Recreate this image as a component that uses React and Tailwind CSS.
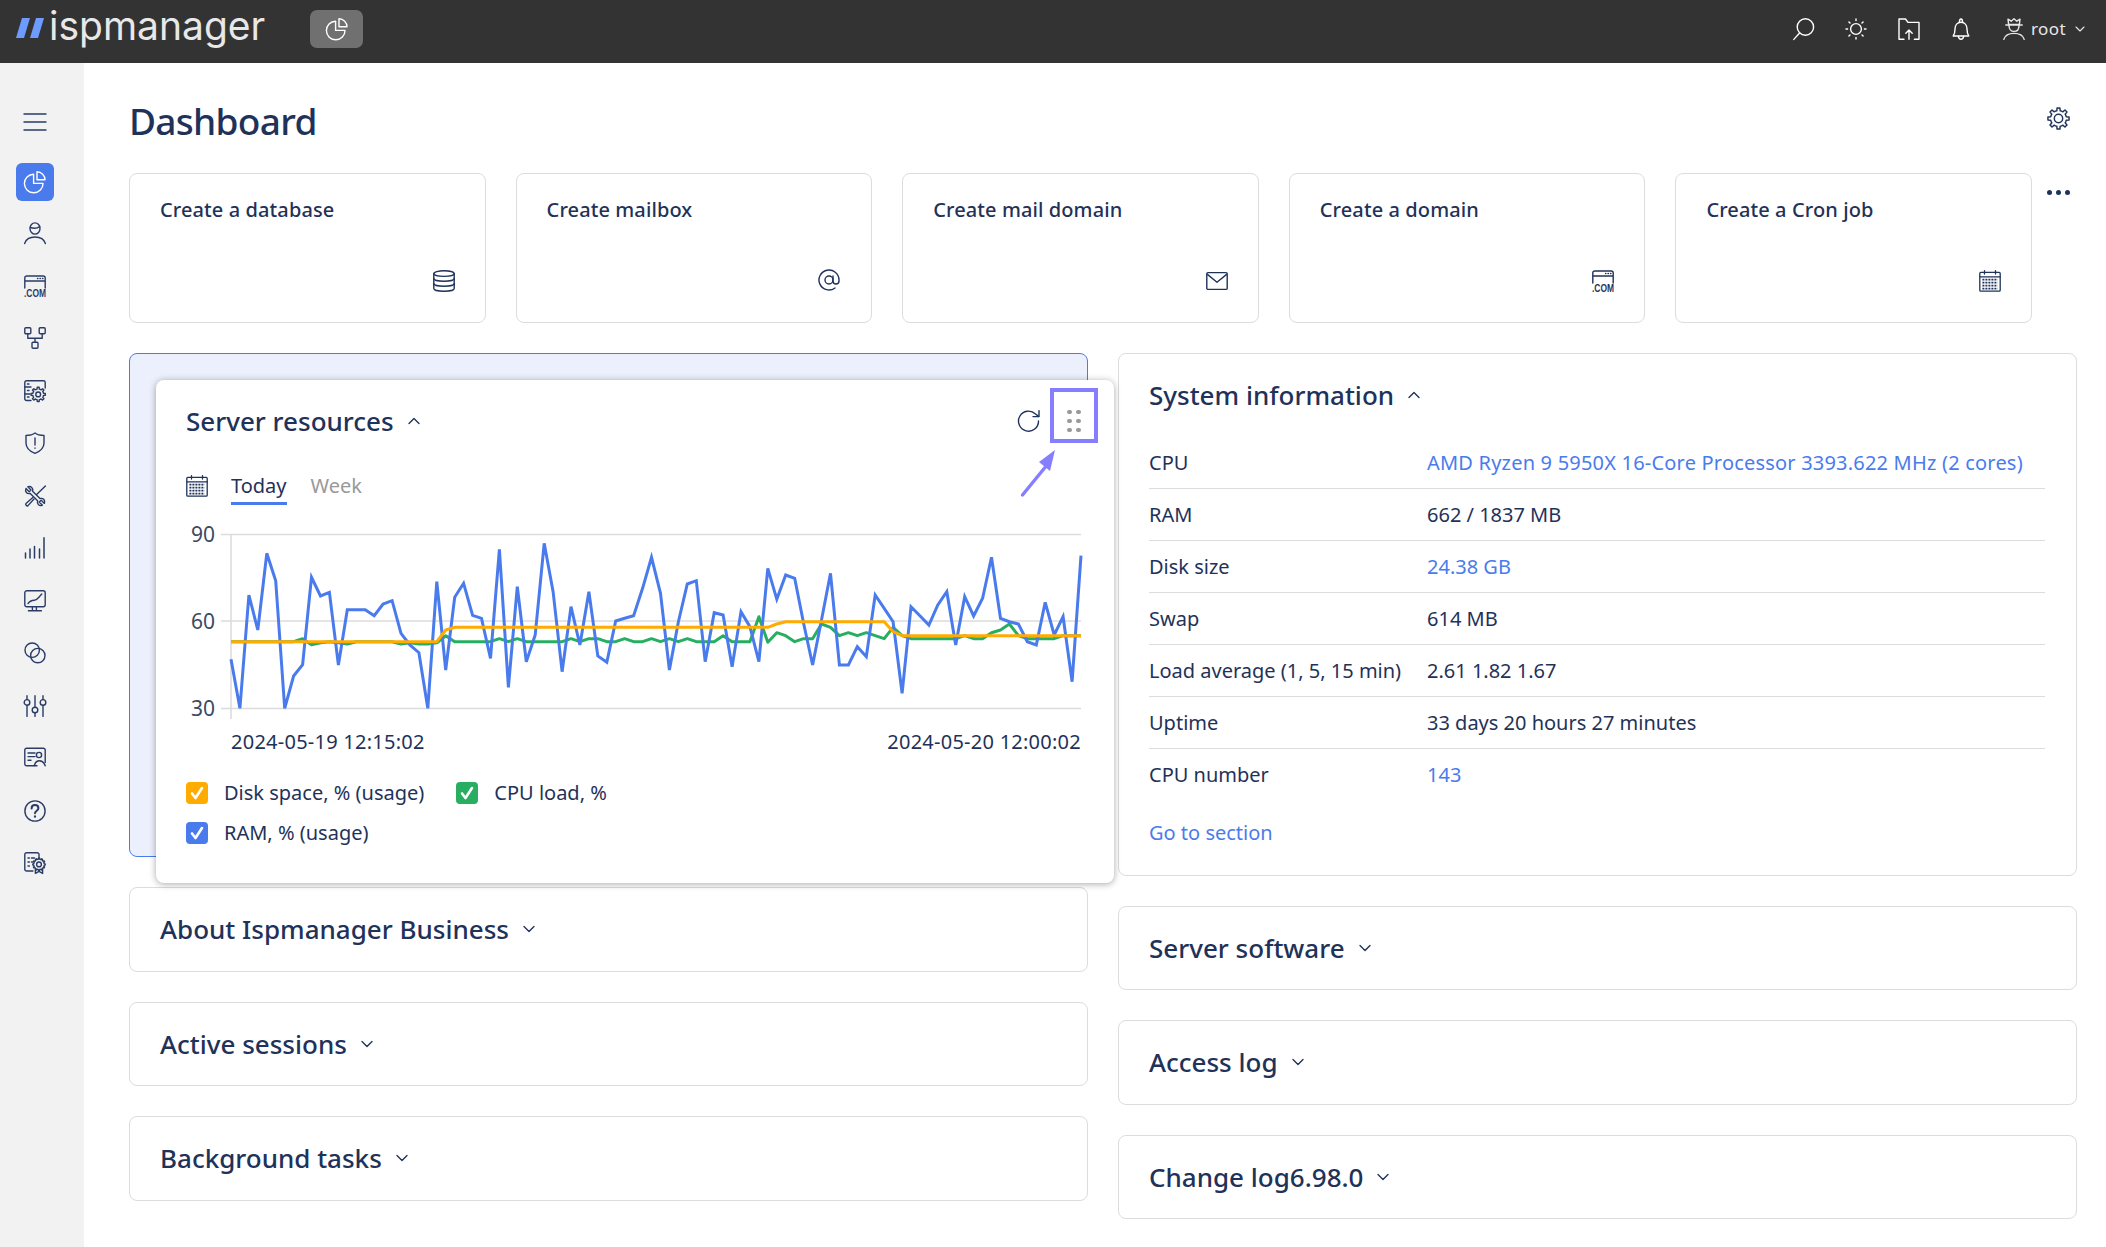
import React from 'react';
import { AtSign, ChevronDown, ChevronUp } from 'lucide-react';

// chart samples, y in screen px * 3 relative to the top of the card area
const RAM = [928,1075,735,840,610,692,1075,978,944,682,738,727,945,779,779,779,797,762,752,850,885,908,1075,695,960,742,700,796,805,925,598,1012,710,935,855,580,725,965,770,885,725,918,937,813,805,797,715,622,730,960,815,702,692,935,788,795,950,785,830,935,655,748,675,685,820,945,810,670,945,945,890,920,735,775,815,1030,770,797,825,765,725,885,740,798,745,622,805,815,822,875,885,757,855,800,995,617];
const CPU = [875,875,875,875,875,875,875,875,866,884,878,875,878,882,875,875,875,875,875,882,878,882,882,878,857,875,875,875,875,875,866,875,866,875,875,875,875,875,866,875,866,866,875,875,866,875,875,866,875,866,875,866,875,875,875,857,875,875,875,800,877,848,857,875,866,866,822,832,857,848,857,848,857,866,832,857,866,866,866,866,866,866,857,866,866,848,840,822,857,866,866,866,866,857,857,857];
const DISK = RAM.map((_, i) => {
  if (i <= 23) return 875;
  if (i === 24) return 840;
  if (i <= 60) return 832;
  if (i === 61) return 822;
  if (i <= 73) return 815;
  if (i === 74) return 845;
  return 857;
});

const points = (arr) => arr.map((v, i) => `${(231 + (i * 850) / 95).toFixed(1)},${(350 + v / 3).toFixed(1)}`).join(' ');

function gearPath(cx, cy, r1, r2, teeth) {
  const step = (Math.PI * 2) / teeth;
  let d = '';
  for (let i = 0; i < teeth; i++) {
    const a = i * step - Math.PI / 2;
    const p = [
      [r2, a - step * 0.5],
      [r2, a - step * 0.27],
      [r1, a - step * 0.17],
      [r1, a + step * 0.17],
      [r2, a + step * 0.27],
    ];
    p.forEach(([r, t], j) => {
      d += `${i === 0 && j === 0 ? 'M' : 'L'}${(cx + r * Math.cos(t)).toFixed(2)} ${(cy + r * Math.sin(t)).toFixed(2)}`;
    });
  }
  return d + 'Z';
}

function Ic({ children, className = 'w-[22px] h-[22px]', sw = 1.4 }) {
  return (
    <svg viewBox="0 0 22 22" fill="none" stroke="currentColor" strokeWidth={sw} strokeLinecap="round" strokeLinejoin="round" className={`overflow-visible ${className}`}>
      {children}
    </svg>
  );
}

const Pie = () => (
  <Ic>
    <path d="M9.6 3.2A9.3 9.3 0 1 0 19 12.4H9.6Z" />
    <path d="M13 .8v8h8A8 8 0 0 0 13 .8Z" />
  </Ic>
);
const Menu = () => (
  <Ic>
    <path d="M0 3h22M0 11h22M0 19h22" />
  </Ic>
);
const User = () => (
  <Ic>
    <ellipse cx="11" cy="6.5" rx="5" ry="5.6" />
    <path d="M6.2 5.5C9 6.5 13 6.5 15.8 4.6" />
    <path d="M.6 21.5C2 17 6 15 11 15s9 2 10.4 6.5" />
  </Ic>
);
const Com = () => (
  <Ic>
    <path d="M.8 13V3A2 2 0 0 1 2.8 1h16.4a2 2 0 0 1 2 2v10M.8 6h20.4" />
    <path d="M13.5 3.5h.4M16 3.5h.4M18.5 3.5h.4" />
    <text x="0" y="21.8" fontSize="10.5" fontWeight="700" fill="currentColor" stroke="none" textLength="22" lengthAdjust="spacingAndGlyphs" fontFamily="'Liberation Sans', sans-serif">.COM</text>
  </Ic>
);
const Network = () => (
  <Ic>
    <rect x=".8" y=".8" width="6" height="6" rx="1" />
    <rect x="15.2" y=".8" width="6" height="6" rx="1" />
    <rect x="8" y="15.2" width="6" height="6" rx="1" />
    <path d="M3.8 6.8v4.4h14.4V6.8M11 11.2v4" />
  </Ic>
);
const ServerGear = () => (
  <Ic>
    <path d="M7 20.5H2.5a1.7 1.7 0 0 1-1.7-1.7V2.5A1.7 1.7 0 0 1 2.5.8h17a1.7 1.7 0 0 1 1.7 1.7V8" />
    <path d="M1 7h6M1 14h5M3.5 4h1.5M3.5 10.5h1.5M3.5 17h1.5" />
    <path d={gearPath(14.2, 14.4, 7.2, 5.4, 8)} />
    <circle cx="14.2" cy="14.4" r="2.4" />
  </Ic>
);
const Shield = () => (
  <Ic>
    <path d="M11 1 C13 2.6 16 3.4 20 3.4 V11 C20 16 16 19.4 11 21.4 C6 19.4 2 16 2 11 V3.4 C6 3.4 9 2.6 11 1Z" />
    <path d="M11 6v7M11 16v.3" />
  </Ic>
);
const Tools = () => (
  <Ic>
    <path d="M2 3.5 5.2 6.7 7 5 3.8 1.8C6.5.6 9.5 2.8 8.6 6.2L16 13.6C19.2 12.6 21.6 15.4 20.4 18.4L17.2 15.2 15.2 17 18.4 20.2C15.4 21.6 12.6 19 13.6 15.8L6.2 8.4C3 9.4.6 6.6 2 3.5Z" />
    <path d="M21.4 1 12.6 9.6M8.8 12.4 2 18.4C1 19.6 2.8 21.6 4 20.6L10 14" />
  </Ic>
);
const Bars = () => (
  <Ic sw={1.5}>
    <path d="M1.5 21v-5M6 21v-9M10.5 21V9.5M15.5 21v-9M20 21V.8" />
  </Ic>
);
const Monitor = () => (
  <Ic>
    <rect x=".8" y=".8" width="20.4" height="16" rx="2" />
    <path d="M4 13.6c1.4-2.4 3-3.2 6.4-3.4 3-.2 3.8-2.6 7.4-6.2" />
    <path d="M8.4 17v3.6M12.4 17v3.6M4.4 20.8h13" />
  </Ic>
);
const Circles = () => (
  <Ic>
    <circle cx="8.2" cy="8.2" r="7.2" />
    <circle cx="13.8" cy="13.6" r="7.2" />
  </Ic>
);
const Sliders = () => (
  <Ic>
    <path d="M3 .8v3.6M3 10.4v11M11 .8v11.4M11 18v3.4M19 .8v3.6M19 10.4v11" />
    <circle cx="3" cy="7.4" r="2.8" />
    <circle cx="11" cy="15" r="2.8" />
    <circle cx="19" cy="7.4" r="2.8" />
  </Ic>
);
const Card = () => (
  <Ic>
    <path d="M13 18.8H2.6A1.8 1.8 0 0 1 .8 17V3A1.8 1.8 0 0 1 2.6 1.2h16.8A1.8 1.8 0 0 1 21.2 3v12.5" />
    <path d="M4 6h7M4 9.6h7M4 13.2h3" />
    <circle cx="15" cy="8" r="2.6" />
    <path d="M10.4 18.6C11 15.2 13 13.8 15.4 13.8s4.6 1.4 5.8 5" />
  </Ic>
);
const Help = () => (
  <Ic>
    <circle cx="11" cy="11" r="10.1" />
    <path d="M7.6 8.4C7.6 6.2 9.2 5 11 5s3.4 1.2 3.4 3.2c0 2.4-3.4 2.6-3.4 5" strokeWidth="2" />
    <path d="M11 16.4v.3" strokeWidth="2.2" />
  </Ic>
);
const Cert = () => (
  <Ic>
    <path d="M9 19H2.6A1.8 1.8 0 0 1 .8 17.2V2.6A1.8 1.8 0 0 1 2.6.8h10.6A1.8 1.8 0 0 1 15 2.6V6" />
    <path d="M4 6h1.4M7.5 6h3M4 10h1.4M7.5 10h1M4 14h1.4" />
    <path d={gearPath(15, 12.4, 6.2, 5.2, 12)} />
    <circle cx="15" cy="12.4" r="2.4" />
    <path d="M11.4 17.6V21.4L15 19.4l3.6 2V17.6" />
  </Ic>
);
const Calendar = () => (
  <Ic sw={1.3}>
    <rect x=".8" y="2.4" width="20.4" height="18.8" rx="1" />
    <path d="M.8 6.8h20.4M5.5.6v3.4M16.5.6v3.4" />
    <path d="M3.4 9.6h15.2M3.4 12.6h15.2M3.4 15.6h15.2M3.4 18.6h15.2" strokeWidth="1.7" strokeDasharray="2 1" strokeLinecap="butt" />
  </Ic>
);
const Database = () => (
  <Ic>
    <ellipse cx="11" cy="3.6" rx="10.2" ry="2.8" />
    <path d="M.8 3.6v14.8c0 1.6 4.6 2.8 10.2 2.8s10.2-1.2 10.2-2.8V3.6" />
    <path d="M.8 8.5c0 1.6 4.6 2.8 10.2 2.8s10.2-1.2 10.2-2.8M.8 13.5c0 1.6 4.6 2.8 10.2 2.8s10.2-1.2 10.2-2.8" />
  </Ic>
);
const Mail = () => (
  <Ic>
    <rect x=".8" y="2.6" width="20.4" height="16.8" rx="1.2" />
    <path d="M1.4 4.4 11 12.2l9.6-7.8" />
  </Ic>
);

const NAV = [User, Com, Network, ServerGear, Shield, Tools, Bars, Monitor, Circles, Sliders, Card, Help, Cert];

const ACTIONS = [
  ['Create a database', Database],
  ['Create mailbox', () => <AtSign size={24} strokeWidth={1.4} className="mt-[1px]" />],
  ['Create mail domain', Mail],
  ['Create a domain', Com],
  ['Create a Cron job', Calendar],
];

const SYSINFO = [
  ['CPU', 'AMD Ryzen 9 5950X 16-Core Processor 3393.622 MHz (2 cores)', true],
  ['RAM', '662 / 1837 MB'],
  ['Disk size', '24.38 GB', true],
  ['Swap', '614 MB'],
  ['Load average (1, 5, 15 min)', '2.61 1.82 1.67'],
  ['Uptime', '33 days 20 hours 27 minutes'],
  ['CPU number', '143', true],
];

function Heading({ children, open }) {
  const Chev = open ? ChevronUp : ChevronDown;
  return (
    <div className="flex items-center gap-[10px] text-[26px] leading-[30px] font-medium text-[#1f3259]">
      <span>{children}</span>
      <Chev size={20} strokeWidth={1.6} />
    </div>
  );
}

function Collapsed({ title }) {
  return (
    <div className="h-[84.5px] border border-[#dcdcdc] rounded-[8px] pl-[30px] flex items-center bg-white">
      <Heading>{title}</Heading>
    </div>
  );
}

function Legend({ color, label }) {
  return (
    <div className="flex items-center gap-[16px]">
      <div className={`w-[22px] h-[22px] rounded-[4px] flex items-center justify-center ${color}`}>
        <svg viewBox="0 0 22 22" className="w-[22px] h-[22px]" fill="none" stroke="white" strokeWidth="2.6" strokeLinecap="round" strokeLinejoin="round">
          <path d="M6 11.5l3.5 4.5L16 6" />
        </svg>
      </div>
      <span>{label}</span>
    </div>
  );
}

function ResourcesCard() {
  return (
    <div className="absolute left-[26px] top-[26px] w-[958px] h-[503px] bg-white rounded-[8px] shadow-[0_1px_7px_rgba(0,0,0,0.35)] px-[30px] pt-[24px]">
      <div className="h-[34px] flex items-center justify-between">
        <Heading open>Server resources</Heading>
        <svg viewBox="0 0 24 24" className="w-[24px] h-[24px] mr-[43px] text-[#1f3259]" fill="none" stroke="currentColor" strokeWidth="1.4" strokeLinecap="round" strokeLinejoin="round">
          <path d="M21.5 12a10 10 0 1 1-3-7L21.6 7.4" />
          <path d="M22 1.6v6h-6" />
        </svg>
      </div>

      <div className="flex items-center h-[48px] mt-[24px] text-[20px] text-[#1f3259]">
        <span className="w-[45px]"><Calendar /></span>
        <span className="relative leading-[28px]">
          Today
          <span className="absolute left-0 right-0 top-[30px] h-[3px] bg-[#4a7bed]" />
        </span>
        <span className="ml-[24px] text-[#999999] leading-[28px]">Week</span>
      </div>

      <svg viewBox="186 524 898 200" className="w-[898px] h-[200px] block mt-[14px]" fill="none">
        <path d="M221 534.5H1081M221 621H1081M221 708.5H1081" stroke="#dcdcdc" strokeWidth="1.6" />
        <path d="M231 534V719" stroke="#dcdcdc" strokeWidth="1.6" />
        <g fill="#3c4a63" fontSize="21" textAnchor="end" fontFamily="'Noto Sans', sans-serif">
          <text x="215" y="542">90</text>
          <text x="215" y="629">60</text>
          <text x="215" y="716">30</text>
        </g>
        <polyline points={points(CPU)} stroke="#27ae60" strokeWidth="3" strokeLinejoin="round" />
        <polyline points={points(RAM)} stroke="#4a7bed" strokeWidth="3" />
        <polyline points={points(DISK)} stroke="#ffab00" strokeWidth="3" strokeLinejoin="round" />
      </svg>

      <div className="h-[36px] pl-[45px] flex items-center justify-between text-[20px] text-[#1f3259] pr-[3px] tracking-[0.25px]">
        <span>2024-05-19 12:15:02</span>
        <span>2024-05-20 12:00:02</span>
      </div>

      <div className="mt-[22px] flex flex-col gap-[18px] text-[20px] leading-[22px] text-[#1f3259]">
        <div className="flex gap-[32px]">
          <Legend color="bg-[#ffab00]" label="Disk space, % (usage)" />
          <Legend color="bg-[#27ae60]" label="CPU load, %" />
        </div>
        <Legend color="bg-[#4a7bed]" label="RAM, % (usage)" />
      </div>

      {/* annotation over the drag handle */}
      <div className="absolute left-[894px] top-[8px] w-[48px] h-[55px] border-[4px] border-[#857fff] pt-[11px] flex items-center justify-center">
        <div className="grid grid-cols-2 gap-x-[4.6px] gap-y-[4.6px]">
          {[0, 1, 2, 3, 4, 5].map((i) => (
            <span key={i} className="w-[4.4px] h-[4.4px] rounded-full bg-[#999999]" />
          ))}
        </div>
      </div>
      <svg viewBox="0 0 40 50" className="absolute left-[864px] top-[68px] w-[40px] h-[50px]" fill="none">
        <path d="M2.5 47 27 17" stroke="#857fff" strokeWidth="3.4" strokeLinecap="round" />
        <path d="M35 2 19 14 30 23Z" fill="#857fff" />
      </svg>
    </div>
  );
}

export default function App() {
  return (
    <div className="min-h-[1247px] flex flex-col bg-white text-[20px] text-[#1f3259] font-['Noto_Sans',sans-serif]">
      <header className="h-[63px] bg-[#333333] flex items-center pl-[16px] pr-[18px] pb-[5px] text-white shrink-0">
        <svg viewBox="0 0 28 20" className="w-[28px] h-[20px] mr-[5px] mt-[-2px]">
          <path d="M6 0h8L8 20H0ZM20 0h8l-6 20h-8Z" fill="#6e9bff" />
        </svg>
        <span className="text-[39px] leading-[58px] mt-[-6px] text-[#e8e8e8] font-['Inter',sans-serif]">ispmanager</span>
        <div className="ml-[45px] w-[53px] h-[38px] rounded-[7px] bg-[#707070] flex items-center justify-center">
          <Pie />
        </div>
        <div className="ml-auto flex items-center gap-[30.6px]">
          <Ic>
            <circle cx="12.4" cy="9" r="8.2" />
            <path d="M6.6 15 .8 21.4" />
          </Ic>
          <Ic>
            <circle cx="11" cy="11" r="5.4" />
            <path d="M11 1v1.6M11 19.4V21M1 11h1.6M19.4 11H21M3.9 3.9 5 5M17 17l1.1 1.1M3.9 18.1 5 17M17 5l1.1-1.1" />
          </Ic>
          <Ic>
            <path d="M6 21.2H1V1h6.5L10 4.4h11v16.8h-4.6" />
            <path d="M11 21.2v-8.8M7.8 15.2 11 12l3.2 3.2" />
          </Ic>
          <Ic>
            <path d="M3.2 18c1.4-1.8 1.8-3.6 1.8-7 0-4 2.4-6.8 6-6.8s6 2.8 6 6.8c0 3.4.4 5.2 1.8 7Z" />
            <path d="M8.4 18.4c.2 1.8 1.2 2.8 2.6 2.8s2.4-1 2.6-2.8M9.4 4.4C9.4 2.4 10 1 11 1s1.6 1.4 1.6 3.4" />
          </Ic>
          <div className="flex items-center gap-[6px] text-[17px] text-[#e8e8e8]">
            <Ic>
              <path d="M5.6 6.4 5 1.2l3.2 2L11 .8l2.8 2.4 3.2-2-.6 5.2Z" />
              <path d="M2.8 7h16.4M6 7.4c0 3.6 2 6 5 6s5-2.4 5-6" />
              <path d="M.8 21.4C2 17.4 5.6 15.4 11 15.4s9 2 10.2 6" />
            </Ic>
            <span className="tracking-[0.4px]">root</span>
            <ChevronDown size={16} strokeWidth={1.6} />
          </div>
        </div>
      </header>

      <div className="flex flex-1">
        <aside className="w-[84px] bg-[#f2f2f2] shrink-0 flex flex-col items-center pt-[48px] pr-[14px] text-[#2a3c66]">
          <div className="h-[22px] mb-[30px]"><Menu /></div>
          <div className="w-[38px] h-[38px] rounded-[6px] bg-[#4a7bed] text-white flex items-center justify-center mb-[6px]">
            <Pie />
          </div>
          {NAV.map((Icon, i) => (
            <div key={i} className="h-[52.5px] flex items-center justify-center"><Icon /></div>
          ))}
        </aside>

        <main className="flex-1 pl-[45px] pr-[29px] min-w-0">
          <div className="h-[110px] flex items-start justify-between pt-[30px]">
            <h1 className="text-[37px] leading-[56px] font-medium text-[#1f3259] tracking-[-0.7px]">Dashboard</h1>
            <svg viewBox="0 0 22 22" fill="none" stroke="currentColor" strokeWidth="1.4" strokeLinejoin="round" className="w-[23px] h-[23px] mr-[7px] mt-[14px]">
              <path d={gearPath(11, 11, 10.2, 7.6, 8)} />
              <circle cx="11" cy="11" r="4" />
            </svg>
          </div>

          <div className="flex">
            <div className="flex-1 grid grid-cols-5 gap-[30px]">
              {ACTIONS.map(([label, Icon]) => (
                <div key={label} className="h-[150px] border border-[#dcdcdc] rounded-[8px] pl-[30px] pr-[30px] pt-[22px] pb-[30px] flex flex-col justify-between">
                  <span className="leading-[28px] font-medium text-[#1f3259] tracking-[0.1px]">{label}</span>
                  <div className="self-end"><Icon /></div>
                </div>
              ))}
            </div>
            <div className="w-[45px] flex justify-end pr-[7px] pt-[17px] gap-[4px]">
              {[0, 1, 2].map((i) => (
                <span key={i} className="w-[5px] h-[5px] rounded-full bg-[#1f3259]" />
              ))}
            </div>
          </div>

          <div className="grid grid-cols-2 gap-[30px] mt-[30px] pb-[28px]">
            <div className="flex flex-col gap-[30px]">
              <div className="relative h-[504px] rounded-[8px] border border-[#4a7bed] bg-[#ecf0fc]">
                <ResourcesCard />
              </div>
              <Collapsed title="About Ispmanager Business" />
              <Collapsed title="Active sessions" />
              <Collapsed title="Background tasks" />
            </div>

            <div className="flex flex-col gap-[30px]">
              <div className="h-[522.5px] border border-[#dcdcdc] rounded-[8px] pl-[30px] pr-[31px] pt-[26px]">
                <Heading open>System information</Heading>
                <div className="mt-[27px]">
                  {SYSINFO.map(([label, value, link], i) => (
                    <div key={label} className={`h-[52px] flex items-center ${i < SYSINFO.length - 1 ? 'border-b border-[#dcdcdc]' : ''}`}>
                      <span className="w-[278px] shrink-0">{label}</span>
                      <span className={`${link ? 'text-[#4a7bed]' : ''} ${i === 0 ? 'tracking-[0.2px]' : ''}`}>{value}</span>
                    </div>
                  ))}
                </div>
                <div className="mt-[18px] text-[#4a7bed] leading-[28px]">Go to section</div>
              </div>
              <Collapsed title="Server software" />
              <Collapsed title="Access log" />
              <Collapsed title="Change log6.98.0" />
            </div>
          </div>
        </main>
      </div>
    </div>
  );
}
